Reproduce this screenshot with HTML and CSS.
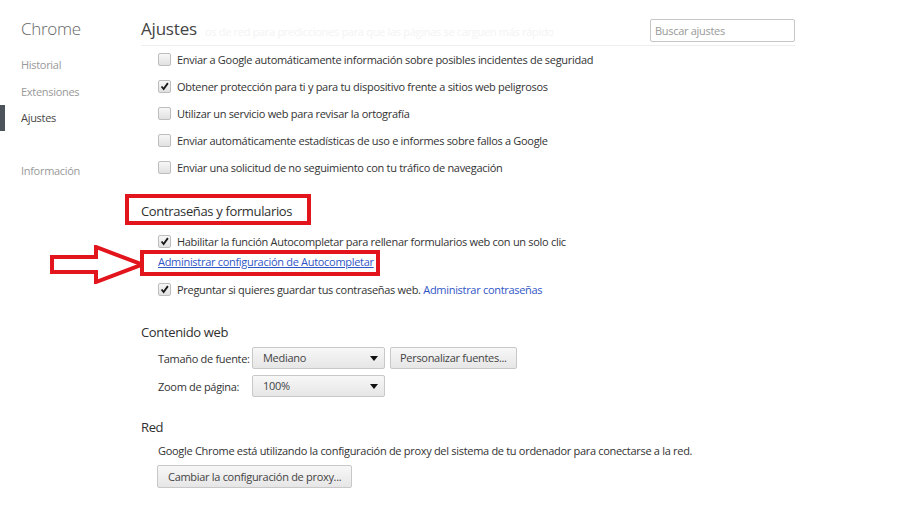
FILE: index.html
```html
<!DOCTYPE html>
<html lang="es">
<head>
<meta charset="utf-8">
<title>Ajustes</title>
<link rel="stylesheet" href="styles.css">
</head>
<body>
<div class="page">
  <nav class="sidebar">
    <div class="brand">Chrome</div>
    <ul class="nav">
      <li class="nav-item">Historial</li>
      <li class="nav-item">Extensiones</li>
      <li class="nav-item selected">Ajustes</li>
      <li class="nav-item spaced">Información</li>
    </ul>
  </nav>
  <main class="main">
    <header class="header">
      <h1 class="title">Ajustes</h1>
      <span class="ghost">os de red para predicciones para que las páginas se carguen más rápido</span>
      <div class="search">Buscar ajustes</div>
    </header>

    <div class="rows">
      <div class="row"><span class="cb"></span><span>Enviar a Google automáticamente información sobre posibles incidentes de seguridad</span></div>
      <div class="row"><span class="cb checked"><svg viewBox="0 0 13 13"><path d="M3 6.5 L5.5 9.5 L10.5 2.5" fill="none" stroke="#1a1a1a" stroke-width="2.2"/></svg></span><span>Obtener protección para ti y para tu dispositivo frente a sitios web peligrosos</span></div>
      <div class="row"><span class="cb"></span><span>Utilizar un servicio web para revisar la ortografía</span></div>
      <div class="row"><span class="cb"></span><span>Enviar automáticamente estadísticas de uso e informes sobre fallos a Google</span></div>
      <div class="row"><span class="cb"></span><span>Enviar una solicitud de no seguimiento con tu tráfico de navegación</span></div>
    </div>

    <section class="section first">
      <h2 class="sec-title"><span class="marked">Contraseñas y formularios</span></h2>
      <div class="row r-auto"><span class="cb checked"><svg viewBox="0 0 13 13"><path d="M3 6.5 L5.5 9.5 L10.5 2.5" fill="none" stroke="#1a1a1a" stroke-width="2.2"/></svg></span><span>Habilitar la función Autocompletar para rellenar formularios web con un solo clic</span></div>
      <div class="link-row">
        <a class="link underline boxed" href="#">Administrar configuración de Autocompletar<svg class="arrow" viewBox="0 0 94 39"><polygon points="2,12 46,12 46,2 92,19.5 46,37 46,27 2,27" fill="#fff" stroke="#e2141c" stroke-width="4" stroke-linejoin="miter"/></svg></a>
      </div>
      <div class="row r-pass"><span class="cb checked"><svg viewBox="0 0 13 13"><path d="M3 6.5 L5.5 9.5 L10.5 2.5" fill="none" stroke="#1a1a1a" stroke-width="2.2"/></svg></span><span>Preguntar si quieres guardar tus contraseñas web. <a class="link" href="#">Administrar contraseñas</a></span></div>
    </section>

    <section class="section web">
      <h2 class="sec-title">Contenido web</h2>
      <div class="form-row">
        <span class="label">Tamaño de fuente:</span>
        <div class="select"><span>Mediano</span><span class="caret"></span></div>
        <div class="button">Personalizar fuentes...</div>
      </div>
      <div class="form-row">
        <span class="label">Zoom de página:</span>
        <div class="select"><span>100%</span><span class="caret"></span></div>
      </div>
    </section>

    <section class="section net">
      <h2 class="sec-title">Red</h2>
      <p class="text">Google Chrome está utilizando la configuración de proxy del sistema de tu ordenador para conectarse a la red.</p>
      <div class="button proxy">Cambiar la configuración de proxy...</div>
    </section>
  </main>
</div>
</body>
</html>
```
FILE: styles.css
```css
*, *::before, *::after { box-sizing: border-box; }
html, body { margin: 0; padding: 0; background: #fff; }
body {
  font-family: "Open Sans", "Noto Sans", "Liberation Sans", sans-serif;
  font-size: 11px;
  letter-spacing: -0.3px;
  color: #333;
  width: 920px;
  height: 507px;
  overflow: hidden;
}
.page { display: flex; }

.sidebar { width: 141px; flex: none; }
.brand {
  height: 46px;
  padding: 17px 0 0 21px;
  font-size: 17px;
  line-height: 24px;
  letter-spacing: -0.3px;
  color: #666;
  font-weight: 300;
}
.nav { list-style: none; margin: 0; padding: 6px 0 0 0; }
.nav-item {
  height: 26.5px;
  line-height: 26px;
  padding-left: 21px;
  color: #999;
  position: relative;
}
.nav-item.selected { color: #464646; }
.nav-item.selected::before {
  content: "";
  position: absolute;
  left: 0; top: 0;
  width: 5px; height: 26px;
  background: #4d535a;
}
.nav-item.spaced { margin-top: 26px; }

.main { width: 654px; flex: none; }
.header {
  height: 46px;
  border-bottom: 1px solid #eee;
  display: flex;
  align-items: flex-start;
  position: relative;
}
.title {
  margin: 17px 0 0 0;
  font-size: 17px;
  line-height: 24px;
  letter-spacing: -0.2px;
  font-weight: 400;
  color: #444;
}
.ghost {
  margin: 23px 0 0 8px;
  color: #f3f3f3;
  font-size: 11px;
  line-height: 18px;
  white-space: nowrap;
}
.search {
  position: absolute;
  right: 0; top: 19px;
  width: 145px; height: 23px;
  border: 1px solid #c6c6c6;
  border-radius: 2px;
  padding: 0 4px;
  line-height: 21px;
  color: #999;
  background: #fff;
}

.rows { padding-left: 17px; }
.row {
  height: 27px;
  display: flex;
  align-items: center;
  white-space: nowrap;
}
.cb {
  width: 13px; height: 13px;
  border: 1px solid #bdbdbd;
  border-radius: 2px;
  background: linear-gradient(#f7f7f7, #e1e1e1);
  margin-right: 6px;
  flex: none;
  display: flex;
}
.cb svg { width: 11px; height: 11px; }

.section { padding-left: 17px; }
.section.first { margin-top: 20px; }
.section.web { margin-top: 19px; }
.section.net { margin-top: 20px; }
.sec-title {
  margin: 0 0 0 -17px;
  height: 20px;
  line-height: 20px;
  font-size: 13px;
  letter-spacing: -0.35px;
  font-weight: 400;
  color: #303030;
}
.marked { position: relative; display: inline-block; }
.marked::after {
  content: "";
  position: absolute;
  left: -16px; top: -7px;
  width: 186px; height: 31px;
  border: 4px solid #e2141c;
}
.r-auto { margin-top: 7px; height: 26px; }
.link-row { height: 16px; line-height: 16px; }
.link { color: #2f56c6; text-decoration: none; }
.link.underline { text-decoration: underline; }
.boxed { position: relative; display: inline-block; }
.boxed::after {
  content: "";
  position: absolute;
  left: -18px; top: -4px; right: -6px; bottom: -6px;
  border: 4px solid #e2141c;
}
.arrow {
  position: absolute;
  left: -108px; top: -9px;
  width: 94px; height: 39px;
}
.r-pass { margin-top: 6px; }

.form-row {
  display: flex;
  align-items: center;
  margin-top: 5px;
  height: 22px;
}
.form-row + .form-row { margin-top: 6px; }
.label { width: 94px; flex: none; white-space: nowrap; }
.select, .button {
  height: 22px;
  border: 1px solid #c8c8c8;
  border-radius: 2px;
  background: linear-gradient(#f7f7f7, #e6e6e6);
  color: #444;
  line-height: 20px;
}
.select {
  width: 133px;
  display: flex;
  align-items: center;
  justify-content: space-between;
  padding: 0 6px 0 10px;
}
.caret {
  width: 0; height: 0;
  border-left: 4px solid transparent;
  border-right: 4px solid transparent;
  border-top: 5px solid #111;
}
.button {
  margin-left: 5px;
  padding: 0 9px;
  white-space: nowrap;
}
.text { margin: 6px 0 0 0; line-height: 16px; height: 16px; white-space: nowrap; }
.button.proxy {
  margin: 6px 0 0 -1px;
  height: 23px;
  line-height: 21px;
  padding: 0 10px;
  display: inline-block;
}
```
